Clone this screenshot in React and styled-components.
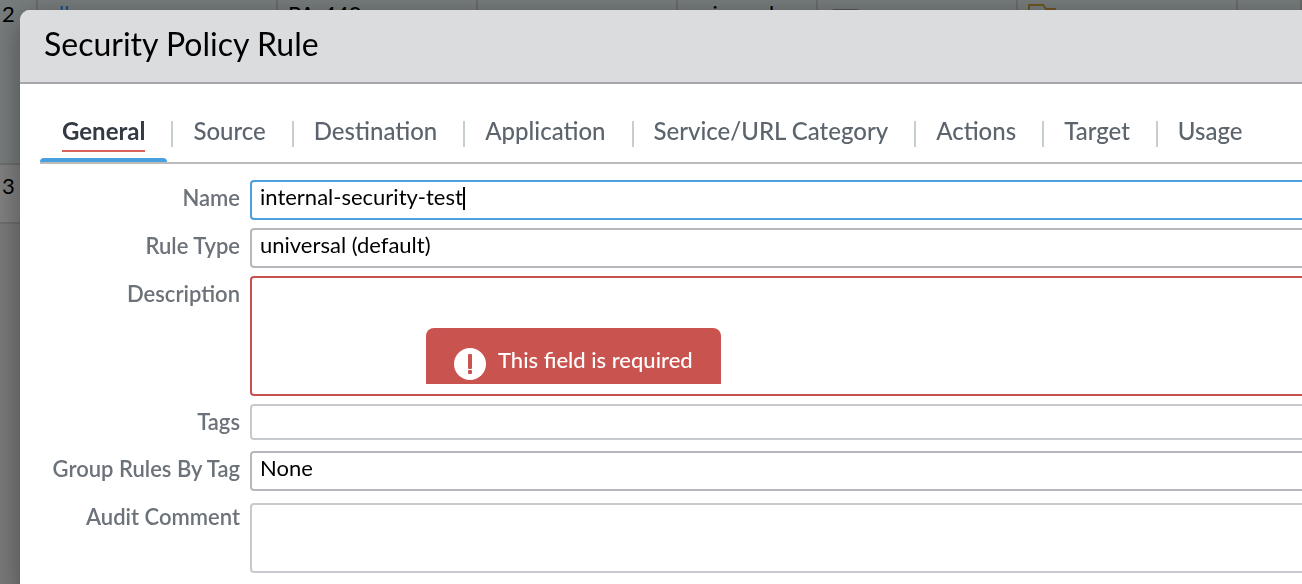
import React, { useState } from "react";
import styled, { createGlobalStyle } from "styled-components";

const GlobalStyle = createGlobalStyle`
  * { box-sizing: border-box; }
  html, body { margin: 0; height: 100%; overflow: hidden; }
  body {
    background: #7b7b7b;
    color: #000;
    font-family: Lato, "Open Sans", sans-serif;
    font-size: 22px;
  }
  button, input, select, textarea { font: inherit; color: inherit; }
`;

const RulesTable = styled.table`
  width: 100%;
  table-layout: fixed;
  border-collapse: separate;
  border-spacing: 0;
`;

const RuleRow = styled.tr`
  height: ${(p) => p.$height}px;
  background: ${(p) => (p.$striped ? "#787d7d" : "#828282")};
`;

const Cell = styled.td`
  padding: 0 0 0 ${(p) => (p.$index ? 2 : 10)}px;
  line-height: ${(p) => (p.$tall ? 42 : 28)}px;
  vertical-align: top;
  white-space: nowrap;
  border-right: 2px solid #6c6c6d;
  border-bottom: 2px solid #6f6f6f;
  svg { display: block; }
`;

const RuleLink = styled.a`
  color: #1f4f99;
  text-decoration: none;
`;

const Modal = styled.section`
  position: fixed;
  top: 10px;
  left: 20px;
  right: -40px;
  min-height: 100vh;
  background: #fff;
  border-radius: 10px;
  box-shadow: 0 8px 32px rgba(0, 0, 0, 0.4);
`;

const ModalHeader = styled.header`
  height: 74px;
  padding: 0 24px;
  background: #dbdcde;
  border-bottom: 2px solid #a5a7ad;
  border-radius: 10px 10px 0 0;
`;

const Title = styled.h1`
  margin: 0;
  font-size: 32px;
  font-weight: 400;
  line-height: 68px;
`;

const ModalBody = styled.div`
  padding: 24px 20px;
`;

const TabBar = styled.div`
  display: flex;
  align-items: flex-end;
  gap: 4px;
  height: 56px;
  border-bottom: 2px solid #bbb;
`;

const Tab = styled.button`
  display: flex;
  flex-direction: column;
  justify-content: flex-end;
  gap: 6px;
  height: 54px;
  padding: 0;
  background: none;
  border: 0;
  color: ${(p) => (p.$selected ? "#333a44" : "#5c646d")};
  font-size: 24px;
  font-weight: ${(p) => (p.$selected ? 700 : 500)};
  white-space: nowrap;
`;

const TabLabel = styled.span`
  height: 38px;
  margin: 0 22px 0 ${(p) => (p.$first ? 22 : 16)}px;
  line-height: 34px;
  border-bottom: 2px solid ${(p) => (p.$invalid ? "#d9625b" : "transparent")};
`;

const TabIndicator = styled.span`
  align-self: stretch;
  height: 4px;
  border-radius: 4px 4px 0 0;
  background: ${(p) => (p.$on ? "#4a9fe0" : "transparent")};
`;

const Divider = styled.span`
  width: 2px;
  height: 26px;
  margin-bottom: 15px;
  background: #c6ced1;
`;

const Form = styled.form`
  display: grid;
  grid-template-columns: 200px 1fr;
  gap: 8px 10px;
  padding-top: 16px;
`;

const Label = styled.label`
  color: #6c727a;
  font-weight: 600;
  line-height: 36px;
  text-align: right;
  white-space: nowrap;
`;

const borders = {
  normal: "#b5b9bd",
  light: "#c6cacf",
  focus: "#4a9fe0",
  error: "#c9514d",
};

const FieldBox = styled.div`
  position: relative;
  display: flex;
  align-items: center;
  height: ${(p) => p.$height}px;
  margin-top: ${(p) => p.$top || 0}px;
  margin-bottom: ${(p) => p.$bottom || 0}px;
  background: #fff;
  border: 2px solid ${(p) => borders[p.$tone || "normal"]};
  border-radius: 4px;
`;

const TextInput = styled.input`
  ${(p) => (p.$fit ? "field-sizing: content;" : "width: 100%;")}
  height: 100%;
  padding: 0 0 8px 8px;
  border: 0;
  outline: 0;
  background: none;
  caret-color: transparent;
`;

const Caret = styled.span`
  width: 2px;
  height: 23px;
  margin-bottom: 4px;
  background: #000;
`;

const Select = styled.select`
  width: 100%;
  height: 100%;
  padding: 0 8px 8px;
  appearance: none;
  border: 0;
  outline: 0;
  background: none;
`;

const TextArea = styled.textarea`
  width: 100%;
  height: 100%;
  padding: 4px 8px;
  border: 0;
  outline: 0;
  resize: none;
  background: none;
`;

const ErrorTip = styled.div`
  position: absolute;
  left: 174px;
  bottom: 10px;
  display: flex;
  gap: 12px;
  height: 56px;
  padding: 0 28px;
  background: #c9534f;
  border-radius: 8px 8px 0 0;
  color: #fff;
  font-weight: 500;
  line-height: 64px;
  white-space: nowrap;
  svg { margin-top: 20px; }
`;

const tabs = [
  "General", "Source", "Destination", "Application",
  "Service/URL Category", "Actions", "Target", "Usage",
];

const FolderIcon = () => (
  <svg width="28" height="26" viewBox="0 0 28 26" fill="none" stroke="#6f5523" strokeWidth="2">
    <path d="M1 25V5h14l3 4h9v16z" />
  </svg>
);

const DeviceIcon = () => (
  <svg width="32" height="28" viewBox="0 0 32 28" fill="none" stroke="#505454" strokeWidth="2">
    <rect x="4" y="10" width="27" height="17" rx="3" />
  </svg>
);

const AlertIcon = () => (
  <svg width="32" height="32" viewBox="0 0 32 32" aria-hidden="true">
    <circle cx="16" cy="16" r="16" fill="#fff" />
    <rect x="14" y="6" width="4" height="15" rx="1" fill="#c9534f" />
    <rect x="14" y="22" width="4" height="4" rx="1" fill="#c9534f" />
  </svg>
);

export default function App() {
  const [active, setActive] = useState("General");
  const [name, setName] = useState("internal-security-test");

  return (
    <>
      <GlobalStyle />
      <RulesTable>
        <colgroup>
          {[38, 240, 200, 200, 140, 200, 220].map((w, i) => <col key={i} width={w} />)}
          <col />
        </colgroup>
        <tbody>
          <RuleRow $height={165} $striped>
            <Cell $index>2</Cell>
            <Cell><RuleLink href="#all">all</RuleLink></Cell>
            <Cell>PA-440</Cell>
            <Cell />
            <Cell>universal</Cell>
            <Cell><DeviceIcon /></Cell>
            <Cell><FolderIcon /></Cell>
            <Cell />
          </RuleRow>
          <RuleRow $height={59}>
            <Cell $index $tall>3</Cell>
            {tabs.slice(1).map((t) => <Cell key={t} />)}
          </RuleRow>
        </tbody>
      </RulesTable>

      <Modal role="dialog" aria-labelledby="dialog-title">
        <ModalHeader><Title id="dialog-title">Security Policy Rule</Title></ModalHeader>
        <ModalBody>
          <TabBar role="tablist">
            {tabs.map((t, i) => (
              <React.Fragment key={t}>
                {i > 0 && <Divider />}
                <Tab type="button" role="tab" aria-selected={t === active} $selected={t === active} onClick={() => setActive(t)}>
                  <TabLabel $first={i === 0} $invalid={t === "General"}>{t}</TabLabel>
                  <TabIndicator $on={t === active} />
                </Tab>
              </React.Fragment>
            ))}
          </TabBar>
          <Form>
            <Label htmlFor="name">Name</Label>
            <FieldBox $height={40} $tone="focus">
              <TextInput $fit id="name" value={name} onChange={(e) => setName(e.target.value)} />
              <Caret />
            </FieldBox>
            <Label htmlFor="type">Rule Type</Label>
            <FieldBox $height={40}>
              <Select id="type"><option>universal (default)</option></Select>
            </FieldBox>
            <Label htmlFor="description">Description</Label>
            <FieldBox $height={120} $tone="error">
              <TextArea id="description" aria-invalid="true" aria-describedby="description-error" />
              <ErrorTip id="description-error" role="alert"><AlertIcon />This field is required</ErrorTip>
            </FieldBox>
            <Label htmlFor="tags">Tags</Label>
            <FieldBox $height={36} $bottom={3} $tone="light">
              <TextInput id="tags" />
            </FieldBox>
            <Label htmlFor="group">Group Rules By Tag</Label>
            <FieldBox $height={40}>
              <Select id="group"><option>None</option></Select>
            </FieldBox>
            <Label htmlFor="audit">Audit Comment</Label>
            <FieldBox $height={70} $top={4} $tone="light">
              <TextArea id="audit" />
            </FieldBox>
          </Form>
        </ModalBody>
      </Modal>
    </>
  );
}
